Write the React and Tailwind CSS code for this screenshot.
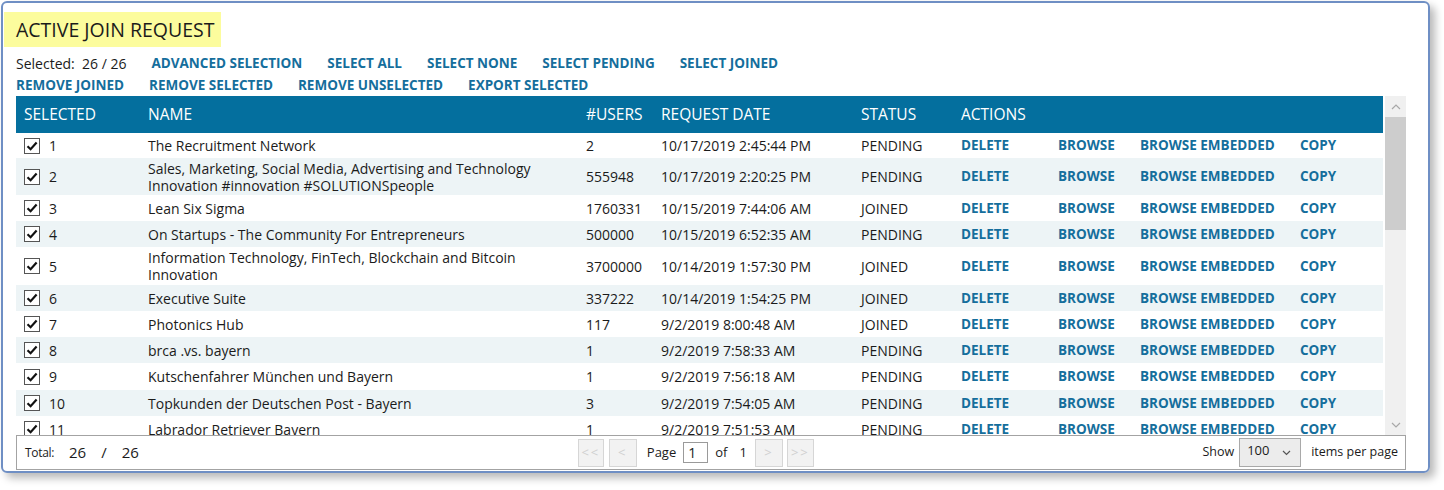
import React from "react";

const rows = [
  { id: 1, h: "h-[25px]", name: ["The Recruitment Network"], users: "2", date: "10/17/2019 2:45:44 PM", status: "PENDING" },
  {
    id: 2,
    h: "h-[37px]",
    name: ["Sales, Marketing, Social Media, Advertising and Technology", "Innovation #innovation #SOLUTIONSpeople"],
    users: "555948",
    date: "10/17/2019 2:20:25 PM",
    status: "PENDING",
  },
  { id: 3, h: "h-[26px]", name: ["Lean Six Sigma"], users: "1760331", date: "10/15/2019 7:44:06 AM", status: "JOINED" },
  { id: 4, h: "h-[26px]", name: ["On Startups - The Community For Entrepreneurs"], users: "500000", date: "10/15/2019 6:52:35 AM", status: "PENDING" },
  {
    id: 5,
    h: "h-[38px]",
    name: ["Information Technology, FinTech, Blockchain and Bitcoin", "Innovation"],
    users: "3700000",
    date: "10/14/2019 1:57:30 PM",
    status: "JOINED",
  },
  { id: 6, h: "h-[26px]", name: ["Executive Suite"], users: "337222", date: "10/14/2019 1:54:25 PM", status: "JOINED" },
  { id: 7, h: "h-[26px]", name: ["Photonics Hub"], users: "117", date: "9/2/2019 8:00:48 AM", status: "JOINED" },
  { id: 8, h: "h-[26px]", name: ["brca .vs. bayern"], users: "1", date: "9/2/2019 7:58:33 AM", status: "PENDING" },
  { id: 9, h: "h-[27px]", name: ["Kutschenfahrer München und Bayern"], users: "1", date: "9/2/2019 7:56:18 AM", status: "PENDING" },
  { id: 10, h: "h-[26px]", name: ["Topkunden der Deutschen Post - Bayern"], users: "3", date: "9/2/2019 7:54:05 AM", status: "PENDING" },
  { id: 11, h: "h-[26px]", name: ["Labrador Retriever Bayern"], users: "1", date: "9/2/2019 7:51:53 AM", status: "PENDING" },
];

const cols = "grid grid-cols-[124px_438px_75px_200px_100px_97px_82px_160px_1fr]";
const link = "text-[13.5px] font-bold text-[#156e9c] cursor-pointer";

const Checkbox = () => (
  <span className="w-[16px] h-[16px] border border-[#555] bg-white flex items-center justify-center">
    <svg width="12" height="12" viewBox="0 0 12 12">
      <path d="M1.5 6.2 L4.6 9.2 L10.6 2.6" fill="none" stroke="#111" strokeWidth="2.2" />
    </svg>
  </span>
);

const PagerBtn = ({ label, w }) => (
  <span
    className={`${w} h-[28px] bg-[#f2f2f2] border border-[#d6d6d6] flex items-center justify-center text-[13px] text-[#d0d0d0] tracking-[2px]`}
  >
    {label}
  </span>
);

export default function App() {
  return (
    <div className="bg-white w-[1444px] h-[490px] pt-[1px] pl-[1px] font-['Open_Sans',sans-serif] text-[#1b1b1b]">
      <div className="w-[1429px] h-[472px] border-2 border-[#6f8fc4] rounded-[6px] shadow-[5px_5px_8px_rgba(0,0,0,0.28)] pt-[9px] pl-[1px] flex flex-col">
        <div className="w-[217px] h-[35px] shrink-0 bg-[#fcfc9d] pl-[12px] flex items-center text-[19.5px]">
          ACTIVE JOIN REQUEST
        </div>

        <div className="pl-[12px] mt-[4px] flex flex-col">
          <div className="h-[24px] flex items-center gap-[25px]">
            <span className="text-[14px]">
              Selected:&nbsp;&nbsp;26 / 26
            </span>
            <span className={link}>ADVANCED SELECTION</span>
            <span className={link}>SELECT ALL</span>
            <span className={link}>SELECT NONE</span>
            <span className={link}>SELECT PENDING</span>
            <span className={link}>SELECT JOINED</span>
          </div>
          <div className="h-[21px] flex items-center gap-[25px]">
            <span className={link}>REMOVE JOINED</span>
            <span className={link}>REMOVE SELECTED</span>
            <span className={link}>REMOVE UNSELECTED</span>
            <span className={link}>EXPORT SELECTED</span>
          </div>

          <div className="w-[1390px] flex flex-col">
            <div className="flex h-[339px] gap-[2px]">
              <div className="w-[1367px] flex flex-col">
                <div className={`${cols} h-[37px] bg-[#046f9e] text-white text-[15.5px] items-center shrink-0`}>
                  <span className="pl-[8px]">SELECTED</span>
                  <span className="pl-[8px]">NAME</span>
                  <span className="pl-[8px]">#USERS</span>
                  <span className="pl-[8px]">REQUEST DATE</span>
                  <span className="pl-[8px]">STATUS</span>
                  <span className="pl-[8px] col-span-4">ACTIONS</span>
                </div>
                <div className="flex-1 overflow-hidden">
                  {rows.map((r, i) => (
                    <div
                      key={r.id}
                      className={`${cols} ${r.h} items-center text-[14px] leading-[17px] ${
                        i % 2 === 1 ? "bg-[#edf4f6]" : "bg-white"
                      }`}
                    >
                      <span className="pl-[8px] flex items-center gap-[9px]">
                        <Checkbox />
                        {r.id}
                      </span>
                      <span className="pl-[8px] flex flex-col">
                        {r.name.map((l) => (
                          <span key={l}>{l}</span>
                        ))}
                      </span>
                      <span className="pl-[8px]">{r.users}</span>
                      <span className="pl-[8px]">{r.date}</span>
                      <span className="pl-[8px]">{r.status}</span>
                      <span className={`pl-[8px] ${link}`}>DELETE</span>
                      <span className={`pl-[8px] ${link}`}>BROWSE</span>
                      <span className={`pl-[8px] ${link}`}>BROWSE EMBEDDED</span>
                      <span className={`pl-[8px] ${link}`}>COPY</span>
                    </div>
                  ))}
                </div>
              </div>
              <div className="w-[21px] bg-[#f0f0f0] flex flex-col">
                <div className="h-[21px] flex items-center justify-center">
                  <svg width="10" height="6" viewBox="0 0 10 6">
                    <path d="M1 5 L5 1 L9 5" fill="none" stroke="#a8a8a8" strokeWidth="1.2" />
                  </svg>
                </div>
                <div className="h-[113px] bg-[#cdcdcd]" />
                <div className="flex-1" />
                <div className="h-[20px] flex items-center justify-center">
                  <svg width="10" height="6" viewBox="0 0 10 6">
                    <path d="M1 1 L5 5 L9 1" fill="none" stroke="#a8a8a8" strokeWidth="1.2" />
                  </svg>
                </div>
              </div>
            </div>

            <div className="h-[35px] border border-[#a3a3a3] flex items-center pl-[8px] pr-[7px]">
              <span className="text-[12px] tracking-[-0.3px] w-[44px]">Total:</span>
              <span className="text-[15px] flex gap-[15px]">
                <span>26</span>
                <span>/</span>
                <span>26</span>
              </span>
              <div className="flex items-center ml-[439px]">
                <PagerBtn label="<<" w="w-[26px]" />
                <span className="w-[5px]" />
                <PagerBtn label="<" w="w-[28px]" />
                <span className="text-[13px] ml-[10px]">Page</span>
                <span className="ml-[7px] w-[25px] h-[21px] border border-[#9a9a9a] bg-white text-[14px] leading-[19px] pl-[4px]">
                  1
                </span>
                <span className="text-[13px] ml-[7px]">of</span>
                <span className="text-[13px] ml-[12px]">1</span>
                <span className="w-[8px]" />
                <PagerBtn label=">" w="w-[28px]" />
                <span className="w-[4px]" />
                <PagerBtn label=">>" w="w-[27px]" />
              </div>
              <div className="ml-auto flex items-center">
                <span className="text-[12.5px]">Show</span>
                <span className="ml-[5px] w-[62px] h-[29px] border border-[#a9a9a9] bg-[#ececec] flex items-start justify-between pl-[7px] pr-[9px] pt-[2px] text-[13px]">
                  100
                  <svg width="9" height="6" viewBox="0 0 9 6" className="mt-[9px]">
                    <path d="M1 1 L4.5 4.5 L8 1" fill="none" stroke="#555" strokeWidth="1.2" />
                  </svg>
                </span>
                <span className="text-[12.5px] ml-[10px]">items per page</span>
              </div>
            </div>
          </div>
        </div>
      </div>
    </div>
  );
}
